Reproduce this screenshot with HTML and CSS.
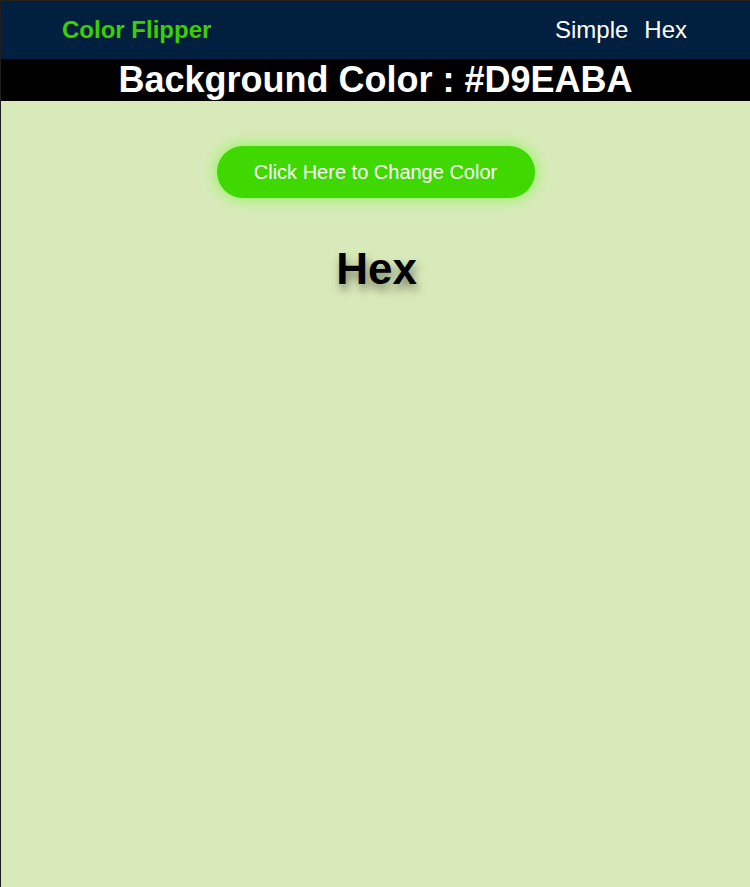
FILE: index.html
```html
<!DOCTYPE html>
<html>
<head>
<meta charset="utf-8">
<link rel="stylesheet" href="styles.css">
</head>
<body>
<nav class="nav">
  <div class="logo">Color Flipper</div>
  <div class="links"><a href="#">Simple</a><a href="#">Hex</a></div>
</nav>
<h2 class="banner">Background Color : #D9EABA</h2>
<main class="main">
  <button class="btn">Click Here to Change Color</button>
  <h1 class="title">Hex</h1>
</main>
</body>
</html>
```
FILE: styles.css
```css
html, body {
  margin: 0;
  padding: 0;
  height: 100%;
}
body {
  background: #d9eaba;
  font-family: "Liberation Sans", Arial, sans-serif;
  border-top: 1px solid #2a2219;
  border-left: 1px solid #1e1e1e;
  box-sizing: border-box;
}
.nav {
  height: 58px;
  background: #012040;
  display: flex;
  align-items: center;
  justify-content: space-between;
  padding: 0 63px 0 61px;
}
.logo {
  color: #3cce00;
  font-weight: bold;
  font-size: 24px;
}
.links {
  display: flex;
  gap: 16px;
}
.links a {
  color: #ffffff;
  text-decoration: none;
  font-size: 24px;
}
.banner {
  margin: 0;
  background: #000;
  color: #fff;
  text-align: center;
  font-size: 36px;
  font-weight: bold;
  height: 42px;
  line-height: 42px;
}
.main {
  display: flex;
  flex-direction: column;
  align-items: center;
  padding-top: 45px;
}
.btn {
  width: 318px;
  height: 52px;
  border: none;
  border-radius: 26px;
  background: #3fd800;
  color: #fff;
  font-family: "Liberation Sans", Arial, sans-serif;
  font-size: 20px;
  box-shadow: 0 0 14px 2px #90f562;
}
.title {
  margin: 46px 0 0 2px;
  font-size: 44px;
  font-weight: bold;
  color: #000;
  text-shadow: 2px 6px 10px rgba(0,0,0,0.45);
}
```
